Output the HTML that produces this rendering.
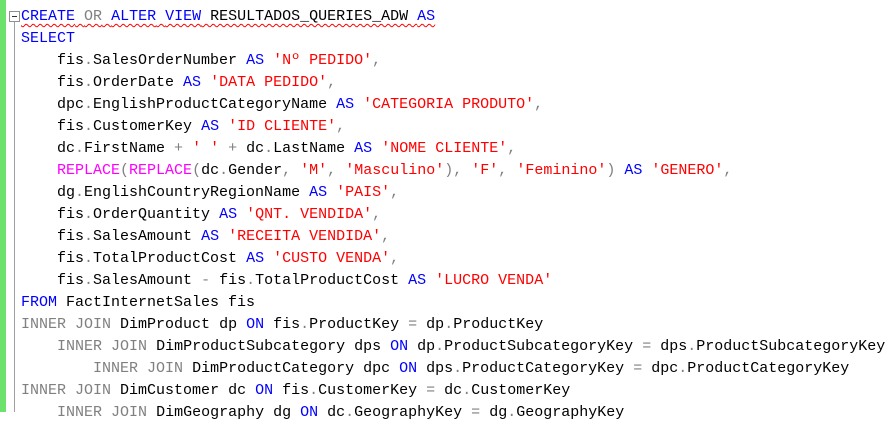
<!DOCTYPE html>
<html><head><meta charset="utf-8"><style>
html,body{margin:0;padding:0;background:#fff;width:892px;height:412px;overflow:hidden}
.g{position:absolute;left:0;top:0;width:6px;height:412px;background:#6ce26c}
.v{position:absolute;left:14px;top:22px;width:1px;height:390px;background:#a0a0a0}
.box{position:absolute;left:9px;top:11px;width:9px;height:9px;border:1px solid #909090;background:#fff}
.box:after{content:"";position:absolute;left:2px;top:4px;width:5px;height:1px;background:#333}
pre{position:absolute;left:21px;top:6px;margin:0;font-family:"Liberation Mono",monospace;font-size:15px;line-height:22px;color:#000}
.k{color:#0000ff}.o{color:#808080}.s{color:#ff0000}.f{color:#ff00ff}
.sq{text-decoration:underline wavy #ff0000;text-decoration-thickness:1px;text-underline-offset:3px}
</style></head><body>
<div class="g"></div><div class="v"></div><div class="box"></div>
<pre><span class="sq"><span class="k">CREATE</span> <span class="o">OR</span> <span class="k">ALTER</span> <span class="k">VIEW</span> RESULTADOS_QUERIES_ADW <span class="k">AS</span></span>
<span class="k">SELECT</span>
    fis<span class="o">.</span>SalesOrderNumber <span class="k">AS</span> <span class="s">'Nº PEDIDO'</span><span class="o">,</span>
    fis<span class="o">.</span>OrderDate <span class="k">AS</span> <span class="s">'DATA PEDIDO'</span><span class="o">,</span>
    dpc<span class="o">.</span>EnglishProductCategoryName <span class="k">AS</span> <span class="s">'CATEGORIA PRODUTO'</span><span class="o">,</span>
    fis<span class="o">.</span>CustomerKey <span class="k">AS</span> <span class="s">'ID CLIENTE'</span><span class="o">,</span>
    dc<span class="o">.</span>FirstName <span class="o">+</span> <span class="s">' '</span> <span class="o">+</span> dc<span class="o">.</span>LastName <span class="k">AS</span> <span class="s">'NOME CLIENTE'</span><span class="o">,</span>
    <span class="f">REPLACE</span><span class="o">(</span><span class="f">REPLACE</span><span class="o">(</span>dc<span class="o">.</span>Gender<span class="o">,</span> <span class="s">'M'</span><span class="o">,</span> <span class="s">'Masculino'</span><span class="o">),</span> <span class="s">'F'</span><span class="o">,</span> <span class="s">'Feminino'</span><span class="o">)</span> <span class="k">AS</span> <span class="s">'GENERO'</span><span class="o">,</span>
    dg<span class="o">.</span>EnglishCountryRegionName <span class="k">AS</span> <span class="s">'PAIS'</span><span class="o">,</span>
    fis<span class="o">.</span>OrderQuantity <span class="k">AS</span> <span class="s">'QNT. VENDIDA'</span><span class="o">,</span>
    fis<span class="o">.</span>SalesAmount <span class="k">AS</span> <span class="s">'RECEITA VENDIDA'</span><span class="o">,</span>
    fis<span class="o">.</span>TotalProductCost <span class="k">AS</span> <span class="s">'CUSTO VENDA'</span><span class="o">,</span>
    fis<span class="o">.</span>SalesAmount <span class="o">-</span> fis<span class="o">.</span>TotalProductCost <span class="k">AS</span> <span class="s">'LUCRO VENDA'</span>
<span class="k">FROM</span> FactInternetSales fis
<span class="o">INNER</span> <span class="o">JOIN</span> DimProduct dp <span class="k">ON</span> fis<span class="o">.</span>ProductKey <span class="o">=</span> dp<span class="o">.</span>ProductKey
    <span class="o">INNER</span> <span class="o">JOIN</span> DimProductSubcategory dps <span class="k">ON</span> dp<span class="o">.</span>ProductSubcategoryKey <span class="o">=</span> dps<span class="o">.</span>ProductSubcategoryKey
        <span class="o">INNER</span> <span class="o">JOIN</span> DimProductCategory dpc <span class="k">ON</span> dps<span class="o">.</span>ProductCategoryKey <span class="o">=</span> dpc<span class="o">.</span>ProductCategoryKey
<span class="o">INNER</span> <span class="o">JOIN</span> DimCustomer dc <span class="k">ON</span> fis<span class="o">.</span>CustomerKey <span class="o">=</span> dc<span class="o">.</span>CustomerKey
    <span class="o">INNER</span> <span class="o">JOIN</span> DimGeography dg <span class="k">ON</span> dc<span class="o">.</span>GeographyKey <span class="o">=</span> dg<span class="o">.</span>GeographyKey</pre>
</body></html>
